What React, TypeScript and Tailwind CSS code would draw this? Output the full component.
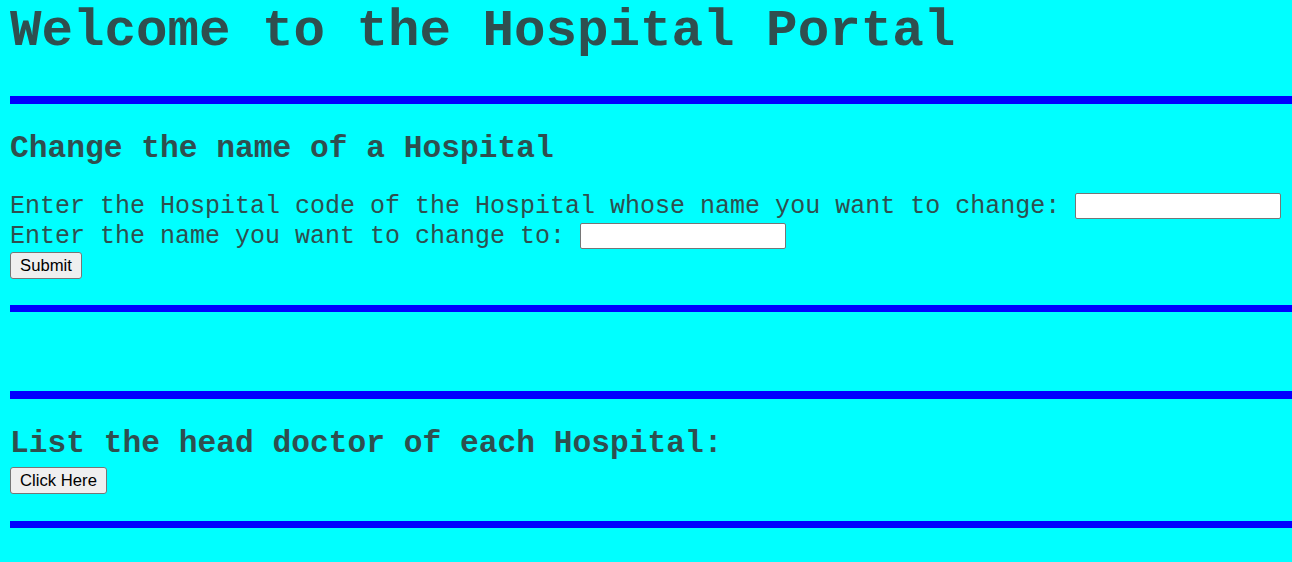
const mono = "font-['Liberation_Mono','Courier_New',monospace]"

function Rule({ className }: { className: string }) {
  return <div className={`ml-[10px] bg-[#0000ff] ${className}`} />
}

function Field() {
  return <div className="w-[206px] h-[26px] ml-[15px] shrink-0 bg-white border border-[#767676] rounded-[2px]" />
}

function Button({ label, width }: { label: string; width: string }) {
  return (
    <div
      className={`${width} h-[27px] flex items-center justify-center bg-[#efefef] border border-[#767676] rounded-[3px] text-black text-[16.67px] font-['Liberation_Sans',Arial,sans-serif]`}
    >
      {label}
    </div>
  )
}

export default function App() {
  return (
    <div className={`w-[1292px] h-[562px] overflow-hidden bg-[#00ffff] text-[#2f4f4f] ${mono} flex flex-col`}>
      <h1 className="mt-[1px] ml-[10px] h-[60px] leading-[60px] text-[52.5px] font-bold whitespace-nowrap">
        Welcome to the Hospital Portal
      </h1>
      <Rule className="mt-[35px] h-[8px]" />

      <h2 className="mt-[27px] ml-[10px] h-[36px] leading-[36px] text-[31.25px] font-bold whitespace-nowrap">
        Change the name of a Hospital
      </h2>
      <div className="mt-[24px] ml-[10px] h-[30px] flex items-center text-[25px] whitespace-nowrap">
        <span className="relative top-[1px]">Enter the Hospital code of the Hospital whose name you want to change:</span>
        <Field />
      </div>
      <div className="ml-[10px] h-[30px] flex items-center text-[25px] whitespace-nowrap">
        <span className="relative top-[1px]">Enter the name you want to change to:</span>
        <Field />
      </div>
      <div className="mt-[1px] ml-[10px] flex">
        <Button label="Submit" width="w-[72px]" />
      </div>
      <Rule className="mt-[26px] h-[7px]" />

      <Rule className="mt-[79px] h-[8px]" />
      <h2 className="mt-[27px] ml-[10px] h-[36px] leading-[36px] text-[31.25px] font-bold whitespace-nowrap">
        List the head doctor of each Hospital:
      </h2>
      <div className="mt-[5px] ml-[10px] flex">
        <Button label="Click Here" width="w-[97px]" />
      </div>
      <Rule className="mt-[27px] h-[7px]" />
    </div>
  )
}
